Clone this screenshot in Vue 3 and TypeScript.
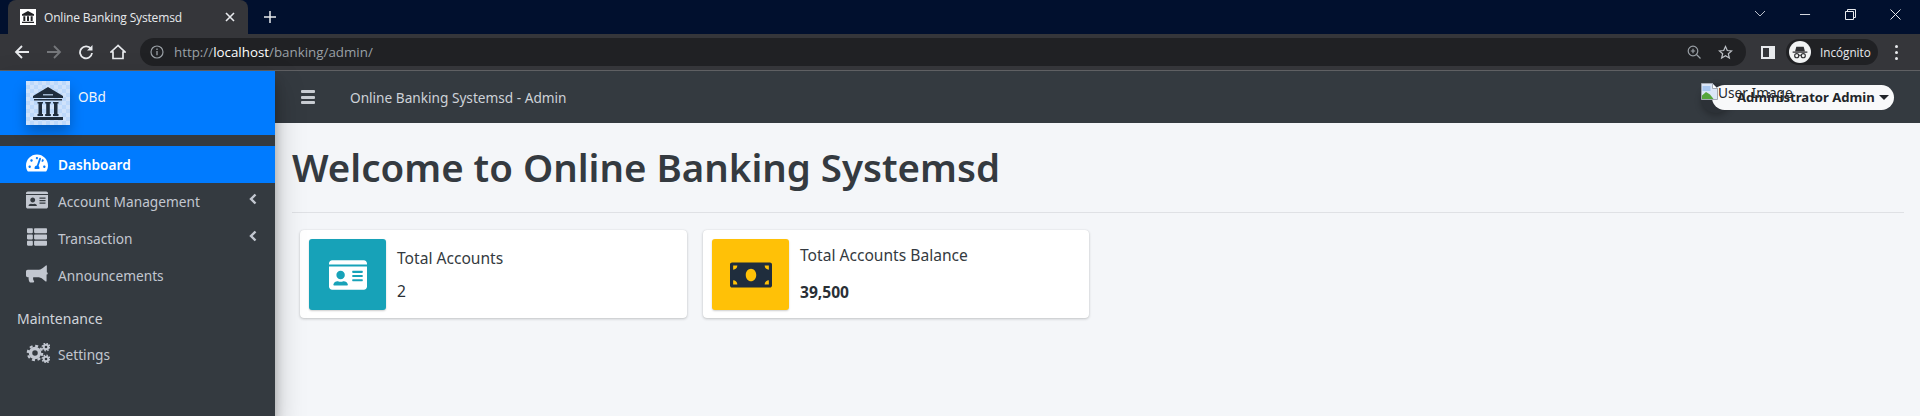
<script setup lang="ts">
interface NavItem { label: string; path: string; box: string; active?: boolean; caret?: boolean }
const idCard = 'M528 32H48C21.5 32 0 53.5 0 80v16h576V80c0-26.5-21.5-48-48-48zM0 432c0 26.5 21.5 48 48 48h480c26.5 0 48-21.5 48-48V128H0v304zm352-232c0-4.4 3.6-8 8-8h144c4.4 0 8 3.6 8 8v16c0 4.4-3.6 8-8 8H360c-4.4 0-8-3.6-8-8v-16zm0 64c0-4.4 3.6-8 8-8h144c4.4 0 8 3.6 8 8v16c0 4.4-3.6 8-8 8H360c-4.4 0-8-3.6-8-8v-16zm0 64c0-4.4 3.6-8 8-8h144c4.4 0 8 3.6 8 8v16c0 4.4-3.6 8-8 8H360c-4.4 0-8-3.6-8-8v-16zM176 192c35.3 0 64 28.7 64 64s-28.7 64-64 64-64-28.7-64-64 28.7-64 64-64zM67.1 396.2C75.5 370.5 99.6 352 128 352h8.2c12.3 5.1 25.7 8 39.8 8s27.6-2.9 39.8-8h8.2c28.4 0 52.5 18.5 60.9 44.2 3.2 9.9-5.2 19.8-15.6 19.8H82.7c-10.4 0-18.8-10-15.6-19.8z'
const money = 'M608 64H32C14.33 64 0 78.33 0 96v320c0 17.67 14.33 32 32 32h576c17.67 0 32-14.33 32-32V96c0-17.67-14.33-32-32-32zM48 400v-64c35.35 0 64 28.65 64 64H48zm0-224v-64h64c0 35.35-28.65 64-64 64zm272 176c-44.19 0-80-42.99-80-96 0-53.02 35.82-96 80-96s80 42.98 80 96c0 53.03-35.83 96-80 96zm272 48h-64c0-35.35 28.65-64 64-64v64zm0-224c-35.35 0-64-28.65-64-64h64v64z'
const gauge = 'M288 32C128.94 32 0 160.94 0 320c0 52.8 14.25 102.26 39.06 144.8 5.61 9.62 16.3 15.2 27.44 15.2h443c11.14 0 21.83-5.58 27.44-15.2C561.75 422.26 576 372.8 576 320c0-159.06-128.94-288-288-288zm0 64c14.71 0 26.58 10.13 30.32 23.65-1.11 2.26-2.64 4.23-3.45 6.67l-9.22 27.67c-5.13 3.49-10.97 6.01-17.64 6.01-17.67 0-32-14.33-32-32S270.33 96 288 96zM96 384c-17.67 0-32-14.33-32-32s14.33-32 32-32 32 14.33 32 32-14.33 32-32 32zm48-160c-17.67 0-32-14.33-32-32s14.33-32 32-32 32 14.33 32 32-14.33 32-32 32zm246.77-72.41l-61.33 184C343.13 347.33 352 364.54 352 384c0 11.72-3.38 22.55-8.88 32H232.88c-5.5-9.45-8.88-20.28-8.88-32 0-33.94 26.5-61.43 59.9-63.59l61.34-184.01c4.17-12.56 17.73-19.45 30.36-15.17 12.57 4.19 19.35 17.79 15.17 30.36zm14.66 57.2l15.52-46.55c3.47-1.29 7.13-2.23 11.05-2.23 17.67 0 32 14.33 32 32s-14.33 32-32 32c-11.38-.01-20.89-6.28-26.57-15.22zM480 384c-17.67 0-32-14.33-32-32s14.33-32 32-32 32 14.33 32 32-14.33 32-32 32z'
const thList = 'M149.333 216v80c0 13.255-10.745 24-24 24H24c-13.255 0-24-10.745-24-24v-80c0-13.255 10.745-24 24-24h101.333c13.255 0 24 10.745 24 24zM0 376v80c0 13.255 10.745 24 24 24h101.333c13.255 0 24-10.745 24-24v-80c0-13.255-10.745-24-24-24H24c-13.255 0-24 10.745-24 24zM125.333 32H24C10.745 32 0 42.745 0 56v80c0 13.255 10.745 24 24 24h101.333c13.255 0 24-10.745 24-24V56c0-13.255-10.745-24-24-24zm80 448H488c13.255 0 24-10.745 24-24v-80c0-13.255-10.745-24-24-24H205.333c-13.255 0-24 10.745-24 24v80c0 13.255 10.745 24 24 24zm-24-424v80c0 13.255 10.745 24 24 24H488c13.255 0 24-10.745 24-24V56c0-13.255-10.745-24-24-24H205.333c-13.255 0-24 10.745-24 24zm24 264H488c13.255 0 24-10.745 24-24v-80c0-13.255-10.745-24-24-24H205.333c-13.255 0-24 10.745-24 24v80c0 13.255 10.745 24 24 24z'
const bullhorn = 'M576 208V32c0-8.700-7-16-16-16-3.600 0-7 1.200-10 3.500L464.900 87.500C422 121.800 368.700 140.400 313.800 140.400H48c-26.500 0-48 21.500-48 48v112c0 26.500 21.500 48 48 48h25.300c-1.100 7.900-1.700 15.900-1.700 24 0 39.800 6.900 68 25.100 103 3.900 8 12.400 13 21.300 13h84.200c18.800 0 30.100-21.600 18.700-36.600-15.900-21.600-24.900-43-24.900-66 0-13.300 1.300-25 3.900-37h116.300c54.900 0 108.200 18.600 151.100 52.900l75.100 60.100c3 2.400 6.400 3.500 10 3.500 8.800 0 16-7.200 16-16V272c17.700 0 32-14.300 32-32s-14.300-32-32-32z'
const nav: NavItem[] = [
  { label: 'Dashboard', path: gauge, box: '0 0 576 512', active: true },
  { label: 'Account Management', path: idCard, box: '0 0 576 512', caret: true },
  { label: 'Transaction', path: thList, box: '0 0 512 512', caret: true },
  { label: 'Announcements', path: bullhorn, box: '0 0 608 512' }
]
</script>

<template>
  <div class="page">
    <header class="chrome">
      <div class="tabstrip">
        <div class="tab">
          <span class="favicon">
            <svg viewBox="0 0 24 24" width="16" height="16"><path fill="#202124" d="M12 3 3 8v2h18V8zM5 11h3v7H5zm5.500 0h3v7h-3zM16 11h3v7h-3zM3 19h18v2H3z"/></svg>
          </span>
          <span class="tabtitle">Online Banking Systemsd</span>
          <svg class="tabclose" viewBox="0 0 10 10" width="10" height="10"><path d="M1 1l8 8M9 1l-8 8" stroke="#e8eaed" stroke-width="1.600"/></svg>
        </div>
        <svg class="newtab" viewBox="0 0 12 12" width="12" height="12"><path d="M6 0v12M0 6h12" stroke="#e8eaed" stroke-width="1.500"/></svg>
        <div class="winctl">
          <svg viewBox="0 0 12 8" width="12" height="8"><path d="M1 1l5 5 5-5" fill="none" stroke="#b9bec9" stroke-width="1"/></svg>
          <svg viewBox="0 0 12 12" width="11" height="11"><path d="M0 6h11" stroke="#e8eaed" stroke-width="1"/></svg>
          <svg viewBox="0 0 11 11" width="11" height="11"><path d="M.5 2.500h8v8h-8zM2.500 2.500v-2h8v8h-2" fill="none" stroke="#e8eaed" stroke-width="1"/></svg>
          <svg viewBox="0 0 11 11" width="11" height="11"><path d="M.5.500l10 10M10.500.500l-10 10" stroke="#e8eaed" stroke-width="1"/></svg>
        </div>
      </div>
      <div class="toolbar">
        <svg class="tool" viewBox="0 0 16 16" width="16" height="16"><path d="M15 8H2M8 2 2 8l6 6" fill="none" stroke="#e8eaed" stroke-width="1.800"/></svg>
        <svg class="tool" viewBox="0 0 16 16" width="16" height="16"><path d="M1 8h13M8 2l6 6-6 6" fill="none" stroke="#75777b" stroke-width="1.800"/></svg>
        <svg class="tool" viewBox="0 0 16 16" width="16" height="16"><path d="M13 5a6 6 0 1 0 1 4" fill="none" stroke="#e8eaed" stroke-width="1.800"/><path d="M14.500 1v5.500H9z" fill="#e8eaed"/></svg>
        <svg class="tool" viewBox="0 0 16 16" width="16" height="16"><path d="M8 1.500 1 8h2v6.500h10V8h2z" fill="none" stroke="#e8eaed" stroke-width="1.700"/></svg>
        <div class="omnibox">
          <svg viewBox="0 0 14 14" width="14" height="14"><circle cx="7" cy="7" r="6" fill="none" stroke="#9aa0a6" stroke-width="1.200"/><path d="M7 6v4.200M7 3.500v1.400" stroke="#9aa0a6" stroke-width="1.300"/></svg>
          <span class="url">http://<b>localhost</b>/banking/admin/</span>
          <span class="omni-right">
            <svg viewBox="0 0 14 14" width="14" height="14"><circle cx="6" cy="6" r="4.800" fill="none" stroke="#9aa0a6" stroke-width="1.200"/><path d="M9.500 9.500 13.500 13.500M6 3.800v4.400M3.800 6h4.400" stroke="#9aa0a6" stroke-width="1.200"/></svg>
            <svg viewBox="0 0 16 16" width="15" height="15"><path d="m8 1.600 1.900 4.300 4.600.4-3.500 3 1.100 4.600L8 11.500l-4.100 2.400L5 9.300l-3.500-3 4.600-.4z" fill="none" stroke="#bdc1c6" stroke-width="1.300"/></svg>
          </span>
        </div>
        <span class="sidepanel"><i></i></span>
        <div class="incog">
          <span class="incog-icon">
            <svg viewBox="0 0 22 22" width="18" height="18"><path fill="#303134" d="M5 10l1.500-5.500h9L17 10zM2 10.500h18V12H2z"/><circle cx="7" cy="15.500" r="2.500" fill="none" stroke="#303134" stroke-width="1.400"/><circle cx="15" cy="15.500" r="2.500" fill="none" stroke="#303134" stroke-width="1.400"/><path d="M9.500 15h3" stroke="#303134" stroke-width="1.200"/></svg>
          </span>
          <span>Incógnito</span>
        </div>
        <span class="kebab"><i></i><i></i><i></i></span>
      </div>
    </header>

    <div class="shell">
      <aside class="sidebar">
        <div class="brand">
          <span class="logo">
            <svg viewBox="0 0 44 44" width="44" height="44"><path fill="#1f2d3d" d="M22 6 7 15v2h30v-2zM8 18h28v1.500H8zM11.500 21h5.500v1.500h-1v10.500h1v2h-5.500v-2h1V22.500h-1zM19.200 21h5.600v1.500h-1v10.500h1v2h-5.600v-2h1V22.500h-1zM27 21h5.500v1.500h-1v10.500h1v2H27v-2h1V22.500h-1zM7 36h30v3H7z"/><path fill="#9db3cc" d="M17 13h10v1.500H17z"/></svg>
          </span>
          <span class="brandname">OBd</span>
        </div>
        <nav class="menu">
          <a v-for="item in nav" :key="item.label" class="item" :class="{ active: item.active }">
            <svg class="navicon" :viewBox="item.box" width="22" height="20"><path fill="currentColor" :d="item.path"/></svg>
            <span>{{ item.label }}</span>
            <svg v-if="item.caret" class="caret" viewBox="0 0 8 12" width="8" height="12"><path d="M6.500 1.500 2 6l4.500 4.500" fill="none" stroke="currentColor" stroke-width="2.400"/></svg>
          </a>
          <div class="section">Maintenance</div>
          <a class="item">
            <svg class="navicon" viewBox="0 0 24 20" width="24" height="20">
              <circle cx="9" cy="10" r="4.500" fill="none" stroke="currentColor" stroke-width="3.500"/>
              <circle cx="9" cy="10" r="7.200" fill="none" stroke="currentColor" stroke-width="2.200" stroke-dasharray="3 2.650"/>
              <circle cx="20" cy="4" r="2.300" fill="none" stroke="currentColor" stroke-width="2"/>
              <circle cx="20" cy="4" r="3.800" fill="none" stroke="currentColor" stroke-width="1.300" stroke-dasharray="1.500 1.480"/>
              <circle cx="20" cy="16" r="2.300" fill="none" stroke="currentColor" stroke-width="2"/>
              <circle cx="20" cy="16" r="3.800" fill="none" stroke="currentColor" stroke-width="1.300" stroke-dasharray="1.500 1.480"/>
            </svg>
            <span>Settings</span>
          </a>
        </nav>
      </aside>

      <div class="main">
        <div class="topbar">
          <span class="burger"><i></i><i></i><i></i></span>
          <span class="navtitle">Online Banking Systemsd - Admin</span>
          <div class="user">
            <span class="avatar-shadow"></span>
            <div class="pill">
              <span>Administrator Admin</span>
              <i class="tri"></i>
            </div>
            <span class="broken">
              <svg viewBox="0 0 17 17" width="17" height="17"><path d="M.5.500h11l5 5v11H.5z" fill="#dbe6f7" stroke="#a3a9b3"/><path d="M11.500.500v5h5z" fill="#fff" stroke="#a3a9b3"/><path d="M1 16v-3.500l4-3.500 4 2.500 3.500 4.500z" fill="#55a53c"/><path d="M1.500 3h8v5h-8z" fill="#a9c8f1"/></svg>
              <span class="alt">User Image</span>
            </span>
          </div>
        </div>
        <div class="content">
          <h1>Welcome to Online Banking Systemsd</h1>
          <hr />
          <div class="cards">
            <div class="card first">
              <span class="iconbox teal">
                <svg viewBox="0 0 576 512" width="38" height="34"><path fill="#fff" :d="idCard"/></svg>
              </span>
              <div class="body one">
                <span class="label">Total Accounts</span>
                <span class="value">2</span>
              </div>
            </div>
            <div class="card second">
              <span class="iconbox amber">
                <svg viewBox="0 0 640 512" width="42" height="34"><path fill="#1f2d3d" :d="money"/></svg>
              </span>
              <div class="body two">
                <span class="label">Total Accounts Balance</span>
                <b class="value">39,500</b>
              </div>
            </div>
          </div>
        </div>
      </div>
    </div>
  </div>
</template>

<style scoped>
.page { width: 1920px; height: 416px; overflow: hidden; display: flex; flex-direction: column; font-family: "Noto Sans", "Open Sans", sans-serif; background: #f4f6f9; }
.chrome { flex: none; font-family: "Open Sans", "Noto Sans", sans-serif; }
.tabstrip { height: 34px; background: #01102e; display: flex; align-items: flex-end; padding-left: 8px; }
.tab { width: 240px; height: 34px; background: #35363a; border-radius: 8px 8px 0 0; display: flex; align-items: center; padding: 0 12px; box-sizing: border-box; gap: 8px; color: #e8eaed; }
.favicon { width: 16px; height: 16px; background: #fff; display: flex; flex: none; }
.tabtitle { font-size: 12px; flex: 1; white-space: nowrap; letter-spacing: -.16px; }
.tabclose { flex: none; margin-right: 1px; }
.newtab { margin: 0 0 11px 16px; }
.winctl { margin-left: auto; align-self: center; display: flex; align-items: center; gap: 34px; padding-right: 19px; margin-top: -6px; }
.toolbar { height: 36px; background: #35363a; border-bottom: 1px solid #5f6063; display: flex; align-items: center; padding-left: 14px; }
.tool { margin-right: 16px; flex: none; }
.omnibox { width: 1606px; height: 28px; margin-left: -2px; background: #202124; border-radius: 14px; display: flex; align-items: center; padding: 0 13px 0 10px; box-sizing: border-box; gap: 10px; flex: none; }
.url { font-size: 13.350px; color: #9aa0a6; white-space: nowrap; }
.url b { font-weight: 400; color: #fff; }
.omni-right { margin-left: auto; display: flex; align-items: center; gap: 17px; }
.sidepanel { width: 14px; height: 13px; margin-left: 15px; background: #e8eaed; display: block; flex: none; }
.sidepanel i { display: block; width: 6px; height: 9px; margin: 0 0 0 2px; position: relative; top: 2px; background: #35363a; }
.incog { width: 92px; height: 26px; margin-left: 11px; background: #202124; border-radius: 13px; display: flex; align-items: center; gap: 9px; color: #e8eaed; font-size: 11.700px; padding-left: 3px; box-sizing: border-box; flex: none; }
.incog-icon { width: 22px; height: 22px; border-radius: 50%; background: #f1f3f4; display: flex; align-items: center; justify-content: center; flex: none; }
.kebab { display: flex; flex-direction: column; gap: 3px; margin-left: 17px; }
.kebab i { width: 3px; height: 3px; border-radius: 50%; background: #e8eaed; }
.shell { flex: 1; display: flex; min-height: 0; }
.sidebar { width: 275px; flex: none; background: #343a40; box-shadow: 0 14px 28px rgba(0,0,0,.25), 0 10px 10px rgba(0,0,0,.22); position: relative; z-index: 2; }
.brand { height: 64px; background: #007bff; display: flex; align-items: flex-start; padding: 10px 0 0 26px; box-sizing: border-box; }
.logo { width: 44px; height: 44px; display: block; flex: none; box-shadow: 0 8px 14px rgba(0,0,0,.25); background-color: #cfe2fb; background-image: conic-gradient(#bcd8fb 25%, transparent 0 50%, #bcd8fb 0 75%, transparent 0); background-size: 8px 8px; }
.brandname { color: #f0f4fa; font-size: 13.600px; margin: 6px 0 0 8px; }
.menu { padding-top: 11px; display: flex; flex-direction: column; }
.item { height: 37px; display: flex; align-items: center; padding-left: 26px; color: #c2c7d0; font-size: 13.700px; position: relative; }
.item span { position: absolute; left: 58px; white-space: nowrap; }
.item.active { background: #007bff; color: #fff; font-weight: 600; }
.navicon { flex: none; margin-top: -3px; }
.caret { position: absolute; left: 249px; top: 10px; }
.section { color: #d0d4db; font-size: 14px; padding: 14px 0 0 17px; height: 42px; line-height: 22px; box-sizing: border-box; }
.main { flex: 1; display: flex; flex-direction: column; min-width: 0; }
.topbar { height: 52px; flex: none; background: #343a40; display: flex; align-items: center; position: relative; color: #ced2d8; box-sizing: border-box; padding-left: 26px; }
.burger { display: flex; flex-direction: column; gap: 2.500px; width: 14px; flex: none; }
.burger i { height: 3px; background: #c8ccd2; border-radius: 1px; display: block; }
.navtitle { font-size: 13.650px; margin-left: 35px; white-space: nowrap; }
.user { margin-left: auto; margin-right: 26px; width: 182px; height: 25px; position: relative; }
.pill { height: 25px; border-radius: 13px; background: #f8f9fa; display: flex; align-items: center; gap: 4px; padding-left: 25px; box-sizing: border-box; color: #212529; font-weight: 700; font-size: 13.100px; white-space: nowrap; position: relative; }
.tri { width: 0; height: 0; border: 5px solid transparent; border-top-color: #212529; border-bottom: 0; }
.avatar-shadow { position: absolute; left: -11px; top: -2px; width: 30px; height: 30px; border-radius: 50%; background: rgba(0,0,0,.14); box-shadow: 0 3px 6px rgba(0,0,0,.25); }
.broken { position: absolute; left: -11px; top: -2px; display: flex; align-items: flex-start; color: #212529; font-size: 13.700px; white-space: nowrap; line-height: 19px; }
.broken svg { flex: none; }
.content { flex: 1; padding: 0 16px 0 17px; }
h1 { margin: 0; padding-top: 22px; font-size: 38.450px; line-height: 44px; font-weight: 600; color: #343a40; white-space: nowrap; }
hr { border: 0; border-top: 1px solid #dfe1e5; margin: 23px 0 17px; }
.cards { display: flex; gap: 16px; padding-left: 8px; }
.card { height: 88px; background: #fff; border-radius: 4px; box-shadow: 0 0 1px rgba(0,0,0,.125), 0 1px 3px rgba(0,0,0,.2); display: flex; padding: 9px; box-sizing: border-box; }
.first { width: 387px; }
.second { width: 386px; }
.iconbox { width: 77px; height: 71px; border-radius: 3px; display: flex; align-items: center; justify-content: center; box-shadow: 0 1px 2px rgba(0,0,0,.2); flex: none; }
.teal { background: #17a2b8; }
.amber { background: #ffc107; }
.body { display: flex; flex-direction: column; margin-left: 11px; color: #343a40; font-size: 15.600px; line-height: 21px; }
.one { padding-top: 9px; gap: 12px; }
.two { padding-top: 6px; gap: 16px; }
.value { color: #2a3036; }
</style>
